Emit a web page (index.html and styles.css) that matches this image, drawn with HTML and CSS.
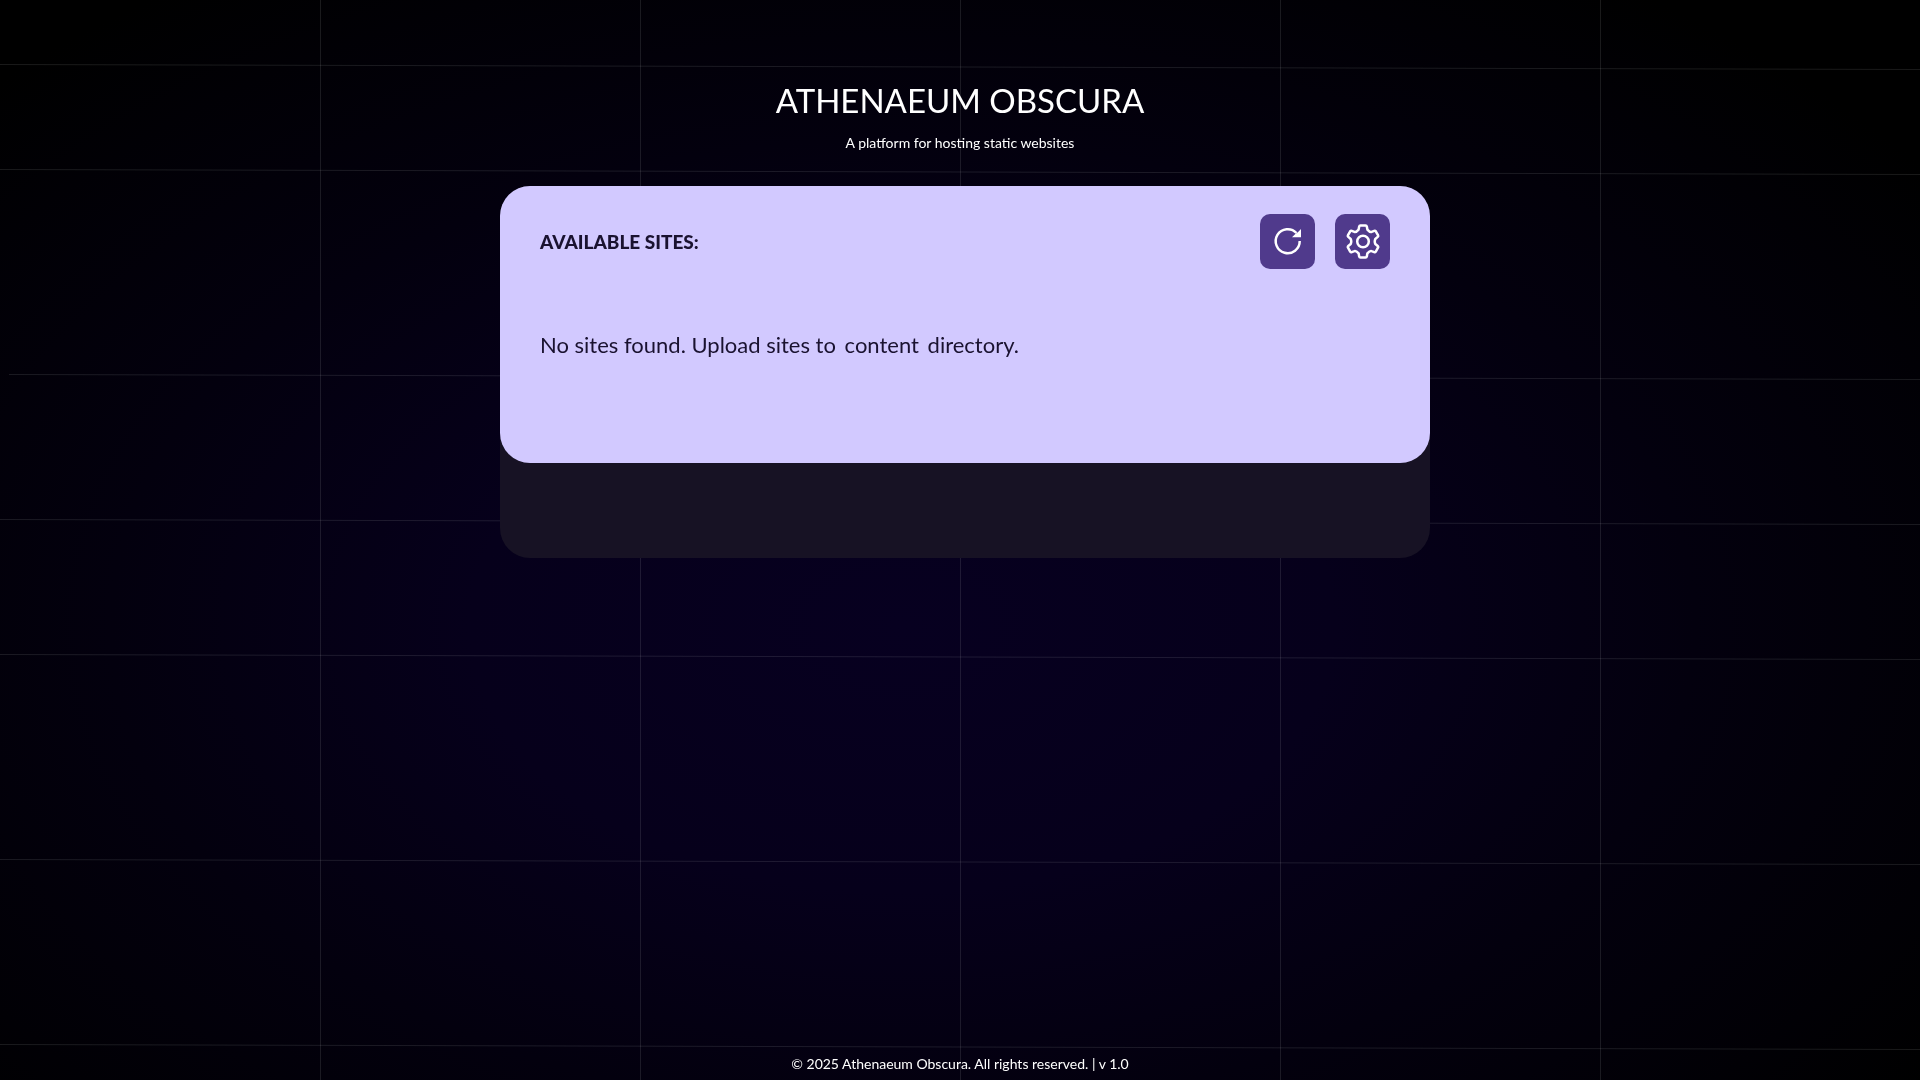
FILE: index.html
```html
<!DOCTYPE html>
<html lang="en">
<head>
<meta charset="utf-8">
<meta name="viewport" content="width=device-width, initial-scale=1">
<title>Athenaeum Obscura</title>
<link rel="stylesheet" href="styles.css">
</head>
<body>
<svg class="grid-lines" viewBox="0 0 1920 1080" preserveAspectRatio="none" aria-hidden="true">
  <path d="M320.5 0V1080M640.5 0V1080M960.5 0V1080M1280.5 0V1080M1600.5 0V1080"/>
  <path d="M0 64.5L1920 69.5M0 169.5L1920 174.5M9 374.5L1920 379.5M0 519.5L1920 524.5M0 654.5L1920 659.5M0 859.5L1920 864.5M0 1044.5L1920 1049.5"/>
</svg>
<header class="masthead">
  <h1 class="title">ATHENAEUM OBSCURA</h1>
  <p class="tagline">A platform for hosting static websites</p>
</header>
<main class="content">
  <div class="shell">
    <section class="panel">
      <div class="panel-head">
        <h2 class="panel-title">AVAILABLE SITES:</h2>
        <div class="actions">
          <button class="action" type="button" aria-label="Refresh">
            <svg width="55" height="55" viewBox="0 0 55 55" aria-hidden="true">
              <path d="M36.5 19A12 12 0 1 0 39.7 27" fill="none" stroke="#fff" stroke-width="2.5"/>
              <path d="M41 15V23.3H32L35.6 19.8L37.6 18.4Z" fill="#fff"/>
            </svg>
          </button>
          <button class="action" type="button" aria-label="Settings">
            <svg width="55" height="55" viewBox="0 0 55 55" aria-hidden="true">
              <g fill="none" stroke="#fff" stroke-width="2.5" stroke-linejoin="round">
                <path d="M25.4 11.5H30.6Q31.6 11.5 31.8 12.4L32.4 15.6Q35 18.6 36.6 17.9L39.2 16.8Q40.2 16.4 40.8 17.3L43 21.2Q43.5 22.2 42.7 22.9L40.3 25Q39.2 27.5 40.3 30L42.7 32Q43.5 32.7 43 33.7L40.8 37.6Q40.2 38.5 39.2 38.1L36.6 37.1Q35 36.4 32.4 39.3L31.8 42.5Q31.6 43.4 30.6 43.4H25.4Q24.4 43.4 24.2 42.5L23.6 39.3Q21 36.4 19.4 37.1L16.8 38.1Q15.8 38.5 15.2 37.6L13 33.7Q12.5 32.7 13.3 32L15.7 30Q16.8 27.5 15.7 25L13.3 22.9Q12.5 22.2 13 21.2L15.2 17.3Q15.8 16.4 16.8 16.8L19.4 17.9Q21 18.6 23.6 15.6L24.2 12.4Q24.4 11.5 25.4 11.5Z"/>
                <circle cx="28" cy="27.5" r="5.8"/>
              </g>
            </svg>
          </button>
        </div>
      </div>
      <p class="empty">No sites found. Upload sites to <span class="path">content</span> directory.</p>
    </section>
  </div>
</main>
<footer class="footer">© 2025 Athenaeum Obscura. All rights reserved. | v 1.0</footer>
</body>
</html>
```
FILE: styles.css
```css
* {
  box-sizing: border-box;
}

body {
  margin: 0;
  min-height: 100vh;
  display: flex;
  flex-direction: column;
  background: radial-gradient(ellipse at 47% 58%, #070020 0%, #06001b 30%, #03000e 55%, #000 88%) #000;
  color: #fff;
  font-family: Lato, sans-serif;
}

h1, h2, p {
  margin: 0;
}

.grid-lines {
  position: fixed;
  inset: 0;
  width: 100%;
  height: 100%;
  z-index: -1;
  fill: none;
  stroke: #fff;
  stroke-opacity: 0.1;
}

.masthead {
  padding-top: 76px;
  text-align: center;
}

.title {
  font-size: 33px;
  font-weight: 400;
  line-height: 48px;
}

.tagline {
  margin-top: 9px;
  font-size: 14px;
  line-height: 20px;
}

.content {
  flex: 1;
  padding: 33px 20px 20px 30px;
}

.shell {
  max-width: 930px;
  margin: 0 auto;
  padding-bottom: 95px;
  border-radius: 30px;
  background: #171224;
}

.panel {
  min-height: 277px;
  padding: 28px 40px;
  border-radius: 30px;
  background: #d2c9ff;
  color: #1a1230;
}

.panel-head {
  display: flex;
  justify-content: space-between;
  align-items: center;
}

.panel-title {
  font-size: 19px;
  font-weight: 900;
  line-height: 28px;
}

.actions {
  display: flex;
  gap: 20px;
}

.action {
  display: block;
  width: 55px;
  height: 55px;
  padding: 0;
  border: 0;
  border-radius: 10px;
  background: #503a8c;
  cursor: pointer;
}

.action svg {
  display: block;
}

.empty {
  margin-top: 61px;
  font-size: 22px;
  line-height: 30px;
}

.path {
  padding: 0 3px;
}

.footer {
  padding-bottom: 6px;
  font-size: 14px;
  line-height: 20px;
  text-align: center;
}
```
